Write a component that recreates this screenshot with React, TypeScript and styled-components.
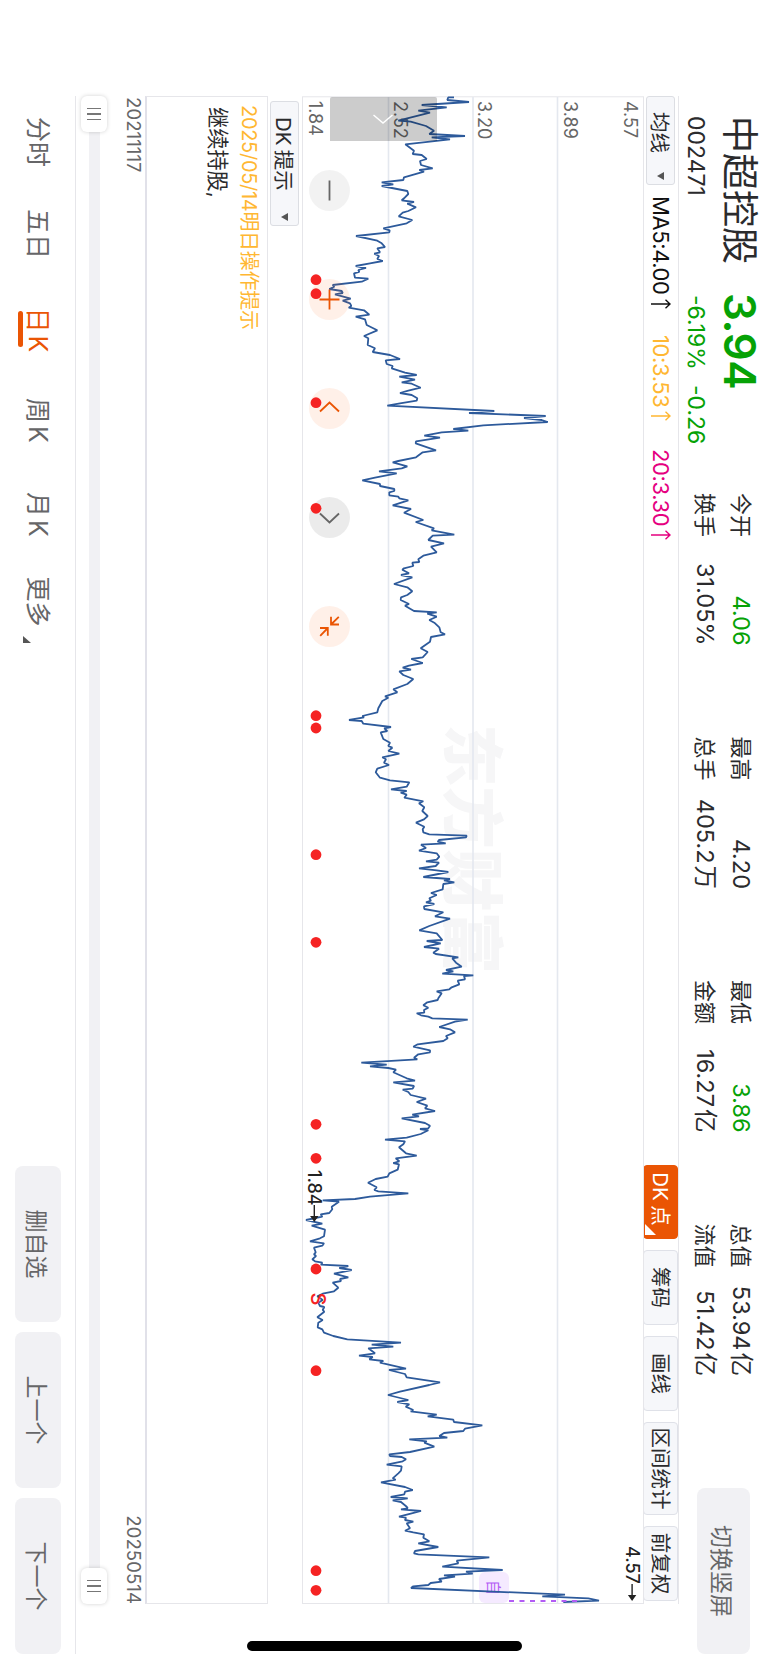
import React from 'react';
import styled, { createGlobalStyle, css } from 'styled-components';

const colors = {
  text: '#2b2b2d',
  textSecondary: '#666668',
  green: '#06a206',
  orange: '#ea5504',
  amber: '#ffb732',
  magenta: '#e5007f',
  line: '#2d5a9b',
  grid: '#e4e8ef',
  border: '#e6e6ea',
  button: '#f1f1f4',
  chip: '#f6f7fa',
  red: '#f52323',
  purple: '#b35cf5',
};

const GlobalStyle = createGlobalStyle`
  * {
    box-sizing: border-box;
  }
  body {
    margin: 0;
    background: #fff;
    font-family: Inter, 'Noto Sans CJK SC', sans-serif;
    color: ${colors.text};
  }
`;

// The phone is held sideways, so the landscape screen is turned a quarter
const Device = styled.div`
  width: 768px;
  height: 1665px;
  overflow: hidden;
  background: #fff;
`;

const Screen = styled.div`
  position: relative;
  display: flex;
  flex-direction: column;
  width: 1665px;
  height: 768px;
  transform-origin: 0 0;
  transform: translateX(768px) rotate(90deg);
  white-space: nowrap;
`;

const Header = styled.header`
  display: flex;
  height: 89px;
  padding: 0 11px 0 116px;
`;

const Quote = styled.div`
  display: grid;
  grid-template-columns: 179px 198px;
  grid-template-rows: 56px 33px;
  align-items: center;
`;

const StockName = styled.h1`
  margin: 2px 0 0;
  font-size: 37px;
  font-weight: 400;
  line-height: 56px;
`;

const Price = styled.div`
  margin-left: -2px;
  color: ${colors.green};
  font-size: 44px;
  font-weight: 600;
  line-height: 56px;
  letter-spacing: -0.5px;
`;

const Code = styled.div`
  font-size: 23px;
  line-height: 30px;
  margin-top: -2px;
`;

const Change = styled.div`
  display: flex;
  gap: 15px;
  color: ${colors.green};
  font-size: 23px;
  line-height: 30px;
  margin-top: -2px;
`;

const Stats = styled.dl`
  display: grid;
  grid-template-columns: repeat(4, 152.5px);
  grid-template-rows: 36px 36px;
  column-gap: 91px;
  margin: 9px 0 0;
`;

const Stat = styled.div`
  display: flex;
  justify-content: space-between;
  align-items: center;
  line-height: 36px;
`;

const StatLabel = styled.dt`
  font-size: 22px;
`;

const StatValue = styled.dd<{ $down?: boolean }>`
  margin: 0;
  font-size: 23.5px;
  color: ${(p) => (p.$down ? colors.green : colors.text)};
`;

const Unit = styled.span`
  margin-left: 2px;
`;

const GreyButton = styled.button<{ $width: number; $height: number }>`
  width: ${(p) => p.$width}px;
  height: ${(p) => p.$height}px;
  padding: 0;
  border: 0;
  border-radius: 8px;
  background: ${colors.button};
  color: ${colors.textSecondary};
  font: inherit;
  font-size: 23px;
`;

const SwitchButton = styled(GreyButton)`
  margin: 18px 0 0 auto;
`;

const Body = styled.main`
  width: 1508px;
  margin-left: 96px;
`;

const Toolbar = styled.div`
  display: flex;
  align-items: center;
  height: 35px;
  border-top: 1px solid ${colors.border};
`;

const Select = styled.div<{ $width: number }>`
  display: flex;
  align-items: center;
  justify-content: space-between;
  width: ${(p) => p.$width}px;
  height: 29px;
  padding: 0 4px 0 15px;
  border: 1px solid #dcdee3;
  border-radius: 3px;
  background: ${colors.chip};
  font-size: 20.5px;
`;

const Caret = styled.i`
  border: 4px solid transparent;
  border-top: 7px solid #555;
  border-bottom: 0;
`;

const Averages = styled.div`
  display: flex;
  margin-left: 11px;
  font-size: 22px;
  line-height: 34px;
`;

const Average = styled.span<{ $color: string; $width: number }>`
  display: flex;
  align-items: center;
  gap: 4px;
  width: ${(p) => p.$width}px;
  color: ${(p) => p.$color};
  letter-spacing: -0.4px;
`;

const Tools = styled.div`
  display: flex;
  gap: 11px;
  margin-left: auto;
  padding-right: 3px;
`;

const Tool = styled.button<{ $width: number; $active?: boolean }>`
  position: relative;
  width: ${(p) => p.$width}px;
  height: 35px;
  padding: 1px 0 0;
  border: 1px solid #dfe1e8;
  border-radius: 4px;
  background: ${colors.chip};
  color: ${colors.text};
  font: inherit;
  font-size: 20.5px;
  line-height: 32px;
  ${(p) =>
    p.$active &&
    css`
      padding-right: 6px;
      border-color: ${colors.orange};
      background: ${colors.orange};
      color: #fff;
      word-spacing: -1.5px;
      &::after {
        content: '';
        position: absolute;
        right: 3px;
        bottom: 1px;
        border-left: 11px solid transparent;
        border-bottom: 11px solid #fff;
      }
    `}
`;

const Chart = styled.section`
  position: relative;
  height: 342px;
`;

const ChartSvg = styled.svg`
  display: block;
  font-family: Inter, 'Noto Sans CJK SC', sans-serif;
`;

const Drawer = styled.div`
  position: absolute;
  left: 1px;
  top: 207px;
  display: flex;
  align-items: center;
  justify-content: center;
  width: 44px;
  height: 107px;
  border-radius: 2px 0 0 2px;
  background: rgba(0, 0, 0, 0.2);
`;

const Controls = styled.div`
  position: absolute;
  left: 74px;
  top: 294px;
  display: flex;
  gap: 68px;
`;

const Control = styled.div<{ $tone: 'light' | 'grey' | 'orange' }>`
  width: 41px;
  height: 41px;
  border-radius: 50%;
  color: ${(p) => (p.$tone === 'orange' ? colors.orange : '#666')};
  background: ${(p) =>
    p.$tone === 'orange' ? 'rgba(255, 85, 4, 0.09)' : p.$tone === 'grey' ? 'rgba(0, 0, 0, 0.08)' : 'rgba(0, 0, 0, 0.05)'};
`;

const HintBar = styled.div`
  display: flex;
  align-items: center;
  height: 34px;
  padding-left: 5px;
  word-spacing: -1.5px;
`;

const HintPanel = styled.div`
  height: 123px;
  padding: 3px 0 0 8px;
  border: 1px solid ${colors.border};
  border-bottom: 2px solid #e1e1e9;
`;

const HintTitle = styled.div`
  color: ${colors.amber};
  font-size: 20px;
  line-height: 31px;
  letter-spacing: -0.3px;
`;

const HintText = styled.div`
  padding-left: 2px;
  font-size: 21.2px;
  line-height: 31px;
`;

const Dates = styled.div`
  display: flex;
  justify-content: space-between;
  padding: 0 0 0 1px;
  color: ${colors.textSecondary};
  font-size: 18.5px;
  line-height: 22px;
  letter-spacing: 0.1px;
`;

const Slider = styled.div`
  display: flex;
  align-items: center;
  justify-content: space-between;
  height: 25px;
  margin: 16px 0 6px;
  background: linear-gradient(#f1f1f4, #f1f1f4) 0 center / 100% 11px no-repeat;
`;

const Thumb = styled.div`
  display: flex;
  align-items: center;
  justify-content: center;
  gap: 4px;
  width: 36px;
  height: 26px;
  border-radius: 6px;
  background: #fff;
  box-shadow: 0 0 4px rgba(0, 0, 0, 0.18);
  i {
    width: 1.6px;
    height: 14px;
    background: #777;
  }
`;

const Footer = styled.footer`
  display: flex;
  height: 76px;
  margin-right: -50px;
  border-top: 1px solid ${colors.border};
`;

const Tabs = styled.nav`
  display: flex;
  padding-left: 21px;
`;

const Tab = styled.div<{ $width: number; $active?: boolean }>`
  position: relative;
  width: ${(p) => p.$width}px;
  font-size: 25px;
  line-height: 74px;
  word-spacing: -4px;
  color: ${(p) => (p.$active ? colors.orange : colors.textSecondary)};
  ${(p) =>
    p.$active &&
    css`
      text-indent: -1px;
      &::after {
        content: '';
        position: absolute;
        left: 2px;
        top: 52px;
        width: 36px;
        height: 5px;
        border-radius: 3px;
        background: ${colors.orange};
      }
    `}
`;

const MoreMark = styled.i`
  display: inline-block;
  margin-left: 9px;
  vertical-align: -6px;
  border-left: 7px solid transparent;
  border-bottom: 8px solid #555;
`;

const Actions = styled.div`
  display: flex;
  gap: 10px;
  margin: 14px 0 0 auto;
`;

const HomeIndicator = styled.div`
  position: absolute;
  left: 1641px;
  top: 246px;
  width: 10px;
  height: 275px;
  border-radius: 5px;
  background: #000;
`;

const stats = [
  { label: '今开', value: '4.06', down: true },
  { label: '最高', value: '4.20' },
  { label: '最低', value: '3.86', down: true },
  { label: '总值', value: '53.94', unit: '亿' },
  { label: '换手', value: '31.05%' },
  { label: '总手', value: '405.2', unit: '万' },
  { label: '金额', value: '16.27', unit: '亿' },
  { label: '流值', value: '51.42', unit: '亿' },
];

const averages = [
  { label: 'MA5:4.00', color: '#111', width: 139 },
  { label: '10:3.53', color: colors.amber, width: 114 },
  { label: '20:3.30', color: colors.magenta, width: 100 },
];

const tools = [
  { label: 'DK 点', width: 74, active: true },
  { label: '筹码', width: 75 },
  { label: '画线', width: 75 },
  { label: '区间统计', width: 93 },
  { label: '前复权', width: 75 },
];

const tabs = [
  { label: '分时', width: 92 },
  { label: '五日', width: 99.5 },
  { label: '日 K', width: 89.5, active: true },
  { label: '周 K', width: 94 },
  { label: '月 K', width: 84.5 },
  { label: '更多', width: 80 },
];

const actions = ['删自选', '上一个', '下一个'];

const gridLines = [210.5, 295, 379.5];

const axisLabels = [
  { label: '4.57', y: 144.5 },
  { label: '3.89', y: 204.5 },
  { label: '3.20', y: 290 },
  { label: '2.52', y: 374 },
  { label: '1.84', y: 459 },
];

const signals = [279.7, 293.7, 402.7, 508.3, 715.7, 728, 854.7, 942.3, 1124.3, 1158.3, 1269, 1370.7, 1570.7, 1590.3];

// Closing prices, as "level,time" pairs; time restarts at the offset of each block
const closes: { offset: number; points: string }[] = [
  {
    offset: 0,
    points:
      '492,22 475,22 472,30 537,36 395,45 470,52 385,62 420,68 325,92 362,95 408,108 432,122 418,132 525,138 425,142 480,148 346,163 372,182 368,192 395,195 410,207 390,213 393,225 428,235 388,240 402,245 342,262 340,270 275,277 310,283 275,288 352,303 355,312 342,325 335,331 372,336 352,341 378,352 355,363 338,368 326,379 367,390 350,400 280,415 299,421 298,427 198,438 262,452 275,460 285,471 262,475 270,487 253,491 267,498 262,507 278,513 240,520 197,528 228,534 205,540 208,546 192,550 195,563 235,566 215,575 128,585 133,590 118,597 155,603 158,609 135,613 182,626 158,632 180,640 184,648 176,653 222,661 238,674 197,680 225,688 230,705 262,721 222,738 235,745 233,765 255,775 248,786 300,795 330,807 287,811 290,822 308,828 305,835 345,848 380,855 328,860 375,869 335,877 365,881 392,893 355,902 330,909 365,915 382,925 380,932 330,940 292,947',
  },
  {
    offset: 930,
    points:
      '613,33 537,39 767,48 702,54 755,60 773,66 580,76 490,87 535,92 455,97 403,107 450,113 378,124 377,130 438,151 398,157 378,172 325,183 308,187 352,199 335,205 267,214 320,220 255,233 217,241 270,252 270,258 313,267 313,273 298,277 298,286 325,290 328,295 355,301 308,316 363,327 342,338 400,360 377,366 432,385 425,391 493,404 428,407 415,420 462,430 423,440 440,457 400,467 385,478 388,486 367,488 370,498 342,505 337,509 357,520 333,525 367,532 312,552 352,562 367,574 352,585 333,592 332,600 357,612 345,617 372,633 440,637 412,641 440,650 418,660 433,668 448,682 452,697 465,703 423,711 420,725 392,745 413,756 398,772 364,777 398,789 357,797 338,803 363,809 328,814 340,825 370,837 352,852 310,868 322,877 285,889 295,893 277,903 265,925 262,937',
  },
  {
    offset: 1860,
    points:
      '217,18 222,22 177,30 215,33 220,41 303,51 283,55 292,63 272,67 280,87 300,98 295,108 307,113 295,123 328,131 277,142 288,148 282,158 297,165 262,176 257,187 270,203 300,211 358,217 350,230 303,238 350,243 332,248 350,254 343,263 400,274 387,280 403,292 397,303 413,318 402,328 378,338 403,350 398,358 400,367 418,373 530,377 528,382 447,390 443,395 467,400 393,404 408,414 387,422 440,430 448,440 440,449 408,454 447,458 437,468 387,475 440,481 475,486 400,501 480,507 462,511 493,517 460,522 458,538 423,549 440,555 418,565 423,572 408,577 433,582 402,589 403,597 460,607 435,619 480,626 418,648 388,661 440,670 457,690 410,693 452,700 402,711 447,716 430,728 437,732 505,742 487,745 498,758 515,770 468,780 490,784 457,791 550,796 522,798 525,808 503,812 508,823 485,832 478,838 440,844 455,850 445,865 443,870 412,877 400,886 415,893 402,900 403,908 380,910 393,916 415,920 427,925 533,929',
  },
  {
    offset: 2730,
    points:
      '495,65 448,81 480,88 495,97 468,108 473,115 460,123 383,133 370,140 420,151 420,157 385,163 372,173 382,178 214,188 290,194 240,199 295,204 318,209 310,217 350,235 375,242 310,247 372,258 368,266 338,269 355,276 362,285 408,296 380,306 412,317 405,325 435,333 367,344 387,349 335,355 405,369 420,377 415,385 390,387 415,391 392,402 350,413 285,419 345,424 340,433 327,442 348,460 380,467 317,475 328,484 310,489 327,493 323,509 298,520 293,530 257,537 234,548 260,562 253,570 265,574 355,580 240,590 195,597 98,601 147,605 125,620 127,628 118,639 92,643 97,650 48,660 97,671 65,677 105,689 102,709 90,715 60,724 102,730 97,737 72,743 77,757 72,763 78,768 67,778 75,784 97,788 93,794 175,798 148,804 185,810 132,821 175,832 150,837 153,843 128,848 145,863 132,874 98,881 82,889 98,900 85,908 90,918',
  },
  {
    offset: 3630,
    points:
      '103,21 98,30 103,35 82,52 98,60 85,68 83,82 97,88 102,98 130,108 172,118 333,128 245,134 310,140 235,145 255,160 207,167 248,171 238,178 280,183 270,188 348,206 297,210 345,222 350,232 450,247 418,255 330,275 294,285 355,300 322,306 358,313 347,320 370,330 362,334 440,344 413,349 490,359 492,366 577,376 525,386 520,393 462,399 448,408 472,413 358,418 410,424 403,428 433,440 360,456 298,463 300,468 335,471 348,478 338,484 290,494 335,499 333,512 325,520 308,535 317,539 273,547 345,561 368,570 345,575 343,583 302,591 353,595 308,601 333,606 350,620 353,625 333,628 393,633 365,640 327,650 348,653 345,660 370,665 350,670 360,685 345,692 370,697 402,703 400,713 418,724 385,730 445,741 375,753 372,760 385,763 598,772 500,782 505,790 457,800 638,810 528,815 548,821 462,826 495,830 447,837 455,845 422,849 415,855 370,859 363,864 825,884 757,889 895,895 927,902 820,906',
  },
];

const linePoints = closes
  .flatMap(({ offset, points }) =>
    points.split(' ').map((pair) => {
      const [level, time] = pair.split(',').map(Number);
      return `${(90 + (offset + time) / 3).toFixed(1)},${(478 - level / 3).toFixed(1)}`;
    })
  )
  .join(' ');

const Icon: React.FC<{ d: string }> = ({ d }) => (
  <svg width="41" height="41" viewBox="-20.5 -20.5 41 41" fill="none" stroke="currentColor" strokeWidth="1.8">
    <path d={d} />
  </svg>
);

const UpArrow = () => (
  <svg width="10" height="20" viewBox="0 0 10 20" fill="none" stroke="currentColor" strokeWidth="1.4">
    <path d="M5 20V1M.8 5.500L5 1l4.200 4.500" />
  </svg>
);

const PriceChart = () => (
  <ChartSvg width="1508" height="342" viewBox="96 124 1508 342">
    <text x="724" y="319" fontSize="62.5" fontWeight="900" fill="#f6f6f7">
      东方财富
    </text>
    <rect x="96.8" y="124.5" width="1506.7" height="341" fill="none" stroke={colors.border} />
    {gridLines.map((y) => (
      <line key={y} x1="97" x2="1603" y1={y} y2={y} stroke={colors.grid} strokeWidth="1.6" />
    ))}
    {axisLabels.map(({ label, y }) => (
      <text key={label} x="101" y={y} fontSize="18" fill="#666">
        {label}
      </text>
    ))}
    <rect x="1572" y="259" width="31" height="30" rx="6" fill="#f5eaff" />
    <text x="1580" y="280" fontSize="15" fill={colors.purple}>
      自
    </text>
    <polyline points={linePoints} fill="none" stroke={colors.line} strokeWidth="1.8" strokeLinejoin="bevel" />
    <line x1="1601" x2="1601" y1="259" y2="191" stroke={colors.purple} strokeWidth="2" strokeDasharray="5 5.5" />
    <g fill="#222" fontSize="18" fontWeight="500">
      <text x="1170" y="460.5">
        1.84
      </text>
      <path d="M1205 453h11v-3.500l6 4.200-6 4.200v-3.500h-11z" />
      <text x="1546" y="142.5">
        4.57
      </text>
      <path d="M1584 135.200h11v-3.500l6 4.200-6 4.200v-3.500h-11z" />
    </g>
  </ChartSvg>
);

const SignalLayer = styled.svg`
  position: absolute;
  left: 0;
  top: 0;
  font-family: Inter, sans-serif;
`;

const App: React.FC = () => {
  return (
    <Device>
      <GlobalStyle />
      <Screen>
        <Header>
          <Quote>
            <StockName>中超控股</StockName>
            <Price>3.94</Price>
            <Code>002471</Code>
            <Change>
              <span>-6.19%</span>
              <span>-0.26</span>
            </Change>
          </Quote>
          <Stats>
            {stats.map((s) => (
              <Stat key={s.label}>
                <StatLabel>{s.label}</StatLabel>
                <StatValue $down={s.down}>
                  {s.value}
                  {s.unit && <Unit>{s.unit}</Unit>}
                </StatValue>
              </Stat>
            ))}
          </Stats>
          <SwitchButton $width={166} $height={53}>
            切换竖屏
          </SwitchButton>
        </Header>

        <Body>
          <Toolbar>
            <Select $width={89}>
              均线
              <Caret />
            </Select>
            <Averages>
              {averages.map((a) => (
                <Average key={a.label} $color={a.color} $width={a.width}>
                  {a.label}
                  <UpArrow />
                </Average>
              ))}
            </Averages>
            <Tools>
              {tools.map((t) => (
                <Tool key={t.label} $width={t.width} $active={t.active}>
                  {t.label}
                </Tool>
              ))}
            </Tools>
          </Toolbar>

          <Chart>
            <PriceChart />
            <Controls>
              <Control $tone="light">
                <Icon d="M-10 0H10" />
              </Control>
              <Control $tone="orange">
                <Icon d="M-10 0H10M0-10V10" />
              </Control>
              <Control $tone="orange">
                <Icon d="M3-9.500L-6 0L3 9.500" />
              </Control>
              <Control $tone="grey">
                <Icon d="M-4-9.500L5 0L-4 9.500" />
              </Control>
              <Control $tone="orange">
                <Icon d="M-9.700-9.300L-2-1.500M-9.700-1.500H-2V-9.500M9.300 9.300L1.500 1.700M9.300 1.700H1.500V9.500" />
              </Control>
            </Controls>
            <SignalLayer width="1508" height="342" viewBox="96 124 1508 342">
              {signals.map((x) => (
                <circle key={x} cx={x} cy="452" r="5.400" fill={colors.red} />
              ))}
              <text x="1292.5" y="457" fontSize="20" fontWeight="500" fill={colors.red}>
                S
              </text>
            </SignalLayer>
            <Drawer>
              <svg width="10" height="22" viewBox="0 0 10 22" fill="none" stroke="#fff" strokeWidth="1.5">
                <path d="M1 1.500L9 11L1 20.500" />
              </svg>
            </Drawer>
          </Chart>

          <HintBar>
            <Select $width={125}>
              DK 提示
              <Caret />
            </Select>
          </HintBar>
          <HintPanel>
            <HintTitle>2025/05/14明日操作提示</HintTitle>
            <HintText>继续持股,</HintText>
          </HintPanel>
          <Dates>
            <span>20211117</span>
            <span>20250514</span>
          </Dates>
          <Slider>
            <Thumb>
              <i />
              <i />
              <i />
            </Thumb>
            <Thumb>
              <i />
              <i />
              <i />
            </Thumb>
          </Slider>

          <Footer>
            <Tabs>
              {tabs.map((t) => (
                <Tab key={t.label} $width={t.width} $active={t.active}>
                  {t.label}
                  {t.label === '更多' && <MoreMark />}
                </Tab>
              ))}
            </Tabs>
            <Actions>
              {actions.map((label) => (
                <GreyButton key={label} $width={156} $height={46}>
                  {label}
                </GreyButton>
              ))}
            </Actions>
          </Footer>
        </Body>
        <HomeIndicator />
      </Screen>
    </Device>
  );
};

export default App;
